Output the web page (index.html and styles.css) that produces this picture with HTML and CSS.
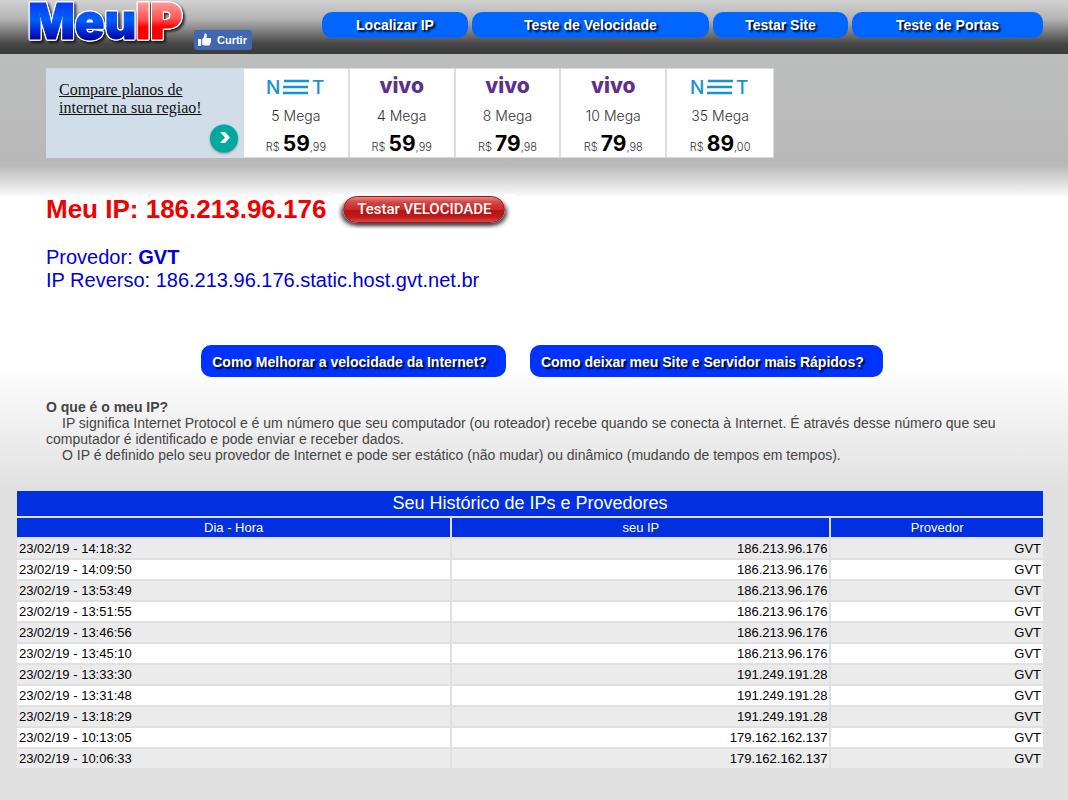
FILE: index.html
```html
<!DOCTYPE html>
<html lang="pt-BR">
<head>
<meta charset="utf-8">
<title>Meu IP</title>
<link rel="stylesheet" href="styles.css">
</head>
<body>
<svg class="defs" aria-hidden="true">
  <defs>
    <linearGradient id="blue" gradientUnits="userSpaceOnUse" x1="0" y1="3" x2="0" y2="40"><stop offset="0" stop-color="#0a3cf0"/><stop offset="0.45" stop-color="#0060ff"/><stop offset="1" stop-color="#0000a8"/></linearGradient>
    <linearGradient id="red" gradientUnits="userSpaceOnUse" x1="0" y1="3" x2="0" y2="40"><stop offset="0" stop-color="#ff9a9a"/><stop offset="0.45" stop-color="#ff5050"/><stop offset="0.65" stop-color="#ff0000"/></linearGradient>
    <symbol id="net" viewBox="0 0 58 16">
      <text class="net-letter" x="-1" y="15">N</text>
      <path d="M17 2h25M16 8h25M16 14h25" stroke="#1592cf" stroke-width="2.4"/>
      <text class="net-letter" x="45" y="15">T</text>
    </symbol>
  </defs>
</svg>
<header class="top">
  <a class="logo" href="#" aria-label="MeuIP">
    <svg width="166" height="48" viewBox="0 0 166 48">
      <text class="logo-text" x="4" y="39" fill="url(#blue)" stroke="url(#blue)">Meu</text>
      <text class="logo-text" x="112" y="39" fill="url(#red)" stroke="url(#red)">IP</text>
    </svg>
  </a>
  <button class="like" type="button">
    <svg width="14" height="14" viewBox="0 0 14 14" fill="#fff"><path d="M0 6h3.200v7H0zM4.200 6.200C5.700 5.400 6.300 3.600 6.400 1.200 6.600.2 8.700.3 8.800 2.400 8.900 3.500 8.500 4.300 8.200 5h3.900c1.400 0 1.500 1.500.7 1.900.7.6.5 1.600-.2 1.900.5.700.2 1.500-.5 1.800.3.900-.1 1.900-1.300 1.900H7c-1.200 0-1.900-.3-2.800-.7z"/></svg>
    Curtir
  </button>
  <nav class="menu">
    <a class="menu-a" href="#">Localizar IP</a>
    <a class="menu-b" href="#">Teste de Velocidade</a>
    <a class="menu-c" href="#">Testar Site</a>
    <a class="menu-d" href="#">Teste de Portas</a>
  </nav>
</header>
<main>
  <section class="intro">
    <div class="plans">
      <a class="compare" href="#">
        <span>Compare planos de internet na sua regiao!</span>
        <svg class="go" width="32" height="32" viewBox="0 0 32 32"><circle cx="16" cy="16.500" r="14" fill="#00a99d"/><path d="M12 10h5l5 5.500-5 5.500h-5l5-5.500z" fill="#fff"/></svg>
      </a>
      <div class="plan"><svg class="brand" width="58" height="16"><use href="#net"/></svg><p class="speed">5 Mega</p><p class="price">R$ <b>59</b>,99</p></div>
      <div class="plan"><p class="vivo">vivo</p><p class="speed">4 Mega</p><p class="price">R$ <b>59</b>,99</p></div>
      <div class="plan"><p class="vivo">vivo</p><p class="speed">8 Mega</p><p class="price">R$ <b>79</b>,98</p></div>
      <div class="plan"><p class="vivo">vivo</p><p class="speed">10 Mega</p><p class="price">R$ <b>79</b>,98</p></div>
      <div class="plan"><svg class="brand" width="58" height="16"><use href="#net"/></svg><p class="speed">35 Mega</p><p class="price">R$ <b>89</b>,00</p></div>
    </div>
    <div class="ip">
      <h1>Meu IP: 186.213.96.176</h1>
      <a class="speedtest-wrap" href="#"><span class="speedtest">Testar VELOCIDADE</span></a>
    </div>
    <p class="provider">Provedor: <b>GVT</b><br>IP Reverso: 186.213.96.176.static.host.gvt.net.br</p>
    <div class="tips">
      <a href="#">Como Melhorar a velocidade da Internet?</a>
      <a href="#">Como deixar meu Site e Servidor mais Rápidos?</a>
    </div>
    <div class="about">
      <h2>O que é o meu IP?</h2>
      <p>IP significa Internet Protocol e é um número que seu computador (ou roteador) recebe quando se conecta à Internet. É através desse número que seu computador é identificado e pode enviar e receber dados.</p>
      <p>O IP é definido pelo seu provedor de Internet e pode ser estático (não mudar) ou dinâmico (mudando de tempos em tempos).</p>
    </div>
  </section>
  <table class="history">
    <colgroup><col class="col-date"><col class="col-ip"><col class="col-isp"></colgroup>
    <thead>
      <tr><th class="title" colspan="3">Seu Histórico de IPs e Provedores</th></tr>
      <tr><th>Dia - Hora</th><th>seu IP</th><th>Provedor</th></tr>
    </thead>
    <tbody>
      <tr><td>23/02/19 - 14:18:32</td><td>186.213.96.176</td><td>GVT</td></tr>
      <tr><td>23/02/19 - 14:09:50</td><td>186.213.96.176</td><td>GVT</td></tr>
      <tr><td>23/02/19 - 13:53:49</td><td>186.213.96.176</td><td>GVT</td></tr>
      <tr><td>23/02/19 - 13:51:55</td><td>186.213.96.176</td><td>GVT</td></tr>
      <tr><td>23/02/19 - 13:46:56</td><td>186.213.96.176</td><td>GVT</td></tr>
      <tr><td>23/02/19 - 13:45:10</td><td>186.213.96.176</td><td>GVT</td></tr>
      <tr><td>23/02/19 - 13:33:30</td><td>191.249.191.28</td><td>GVT</td></tr>
      <tr><td>23/02/19 - 13:31:48</td><td>191.249.191.28</td><td>GVT</td></tr>
      <tr><td>23/02/19 - 13:18:29</td><td>191.249.191.28</td><td>GVT</td></tr>
      <tr><td>23/02/19 - 10:13:05</td><td>179.162.162.137</td><td>GVT</td></tr>
      <tr><td>23/02/19 - 10:06:33</td><td>179.162.162.137</td><td>GVT</td></tr>
    </tbody>
  </table>
</main>
</body>
</html>
```
FILE: styles.css
```css
* { box-sizing: border-box; }
html { background: #e0e0e0; }
body {
  margin: 0;
  font-family: "Liberation Sans", Arial, sans-serif;
  background: linear-gradient(#bcbebd 54px, #b8b8b8 165px, #ffffff 198px, #ffffff 365px, #e0e0e0 490px, #e0e0e0);
}
h1, h2, p { margin: 0; }
a { text-decoration: none; }
.defs { position: absolute; width: 0; height: 0; }

.top {
  display: flex;
  align-items: flex-start;
  height: 54px;
  padding-right: 25px;
  padding-left: 24px;
  background: linear-gradient(#d2d2d2, #b4b4b4 35%, #454545 82%, #3b3b3b);
}
.logo svg {
  display: block;
  overflow: visible;
  filter: drop-shadow(1px 0 0 #fff) drop-shadow(-1px 0 0 #fff) drop-shadow(0 1px 0 #fff) drop-shadow(0 -1px 0 #fff) drop-shadow(2px 2px 1px rgba(0, 0, 0, 0.7));
}
.logo-text {
  font: 900 49px Inter, sans-serif;
  stroke-width: 1px;
}
.like {
  display: flex;
  align-items: center;
  gap: 5px;
  height: 20px;
  margin: 30px 0 0 4px;
  padding: 0 5px 0 4px;
  border: 0;
  border-radius: 3px;
  background: #4267b2;
  color: #fff;
  font: bold 11px "Liberation Sans", Arial, sans-serif;
}
.menu {
  display: flex;
  flex: 1;
  gap: 4px;
  margin: 12px 0 0 70px;
}
.menu a {
  flex: 1 1 0;
  border-radius: 10px;
  background: #0066ff;
  line-height: 26px;
  text-align: center;
}
.menu .menu-a { flex-grow: 146; }
.menu .menu-b { flex-grow: 237; }
.menu .menu-c { flex-grow: 135; }
.menu .menu-d { flex-grow: 191; }
.menu a, .tips a {
  color: #fff;
  font-weight: bold;
  font-size: 14px;
  text-shadow: 2px 2px 2px #000;
}

.intro { padding: 14px 30px 0 46px; }
.plans {
  display: grid;
  grid-template-columns: 198px repeat(5, 1fr);
  max-width: 728px;
  height: 90px;
  border: 1px solid #d8d8d8;
  border-left: 0;
  background: #fff;
}
.compare {
  position: relative;
  padding: 12px 24px 0 13px;
  background: #d1deea;
  color: #111;
  font: 16px/18px "Liberation Serif", "Times New Roman", serif;
  text-decoration: underline;
}
.go { position: absolute; right: 4px; bottom: 4px; filter: drop-shadow(0 1px 1px rgba(0, 0, 0, 0.4)); }
.plan {
  display: flex;
  flex-direction: column;
  align-items: center;
  border-right: 2px solid #ddd;
  font-family: Inter, sans-serif;
  color: #333;
}
.plan:last-child { border-right: 0; }
.brand { margin: 10px 0 4px; }
.net-letter { font: 500 19px Inter, sans-serif; fill: #1592cf; }
.vivo { height: 30px; color: #5f2e8e; font: 800 21px/34px Inter, sans-serif; }
.speed { font-weight: 300; font-size: 14px; line-height: 34px; }
.price { font-weight: 300; font-size: 11px; line-height: 22px; }
.price b { color: #000; font-weight: 700; font-size: 21px; }

.ip { display: flex; align-items: flex-start; margin-top: 36px; }
.ip h1 { color: #f00000; font-size: 26px; line-height: 30px; }
.speedtest-wrap { margin-left: 7px; padding: 2px 10px 4px; background: #fff; }
.speedtest {
  display: block;
  width: 162px;
  border: 1px solid #a51414;
  border-radius: 14px;
  background: linear-gradient(#e58a8a, #d24848 20%, #c82828 50%, #b51212 55%, #c01a1a 80%, #dc4a4a);
  box-shadow: -3px 3px 4px -1px #444, 3px 3px 4px -1px #444;
  color: #fff;
  font: 500 15px/25px Roboto, sans-serif;
  text-align: center;
}
.provider { margin-top: 19px; color: #0000d8; font-size: 20px; line-height: 23px; }
.tips { display: flex; justify-content: center; gap: 24px; margin-top: 53px; }
.tips a { padding: 2px 19px 0 11px; border-radius: 10px; background: #0033ff; line-height: 30px; }
.about { margin-top: 22px; color: #444; font-size: 14px; line-height: 16px; }
.about h2 { font-size: 14px; line-height: 16px; }
.about p { text-indent: 16px; }

.history {
  width: calc(100% - 38px);
  margin: 26px 23px 30px 15px;
  border-spacing: 2px;
  table-layout: fixed;
  font-size: 13px;
  line-height: 15px;
}
.col-date { width: 42.4%; }
.col-ip { width: 36.9%; }
.col-isp { width: 20.7%; }
.history th { padding: 2px; background: #0030df; color: #fff; font-weight: normal; }
.history .title { font-size: 18px; line-height: 21px; }
.history td { padding: 2px; color: #000; text-align: right; }
.history td:first-child { text-align: left; }
.history tbody tr:nth-child(odd) td { background: #ebebeb; }
.history tbody tr:nth-child(even) td { background: #fff; }
```
